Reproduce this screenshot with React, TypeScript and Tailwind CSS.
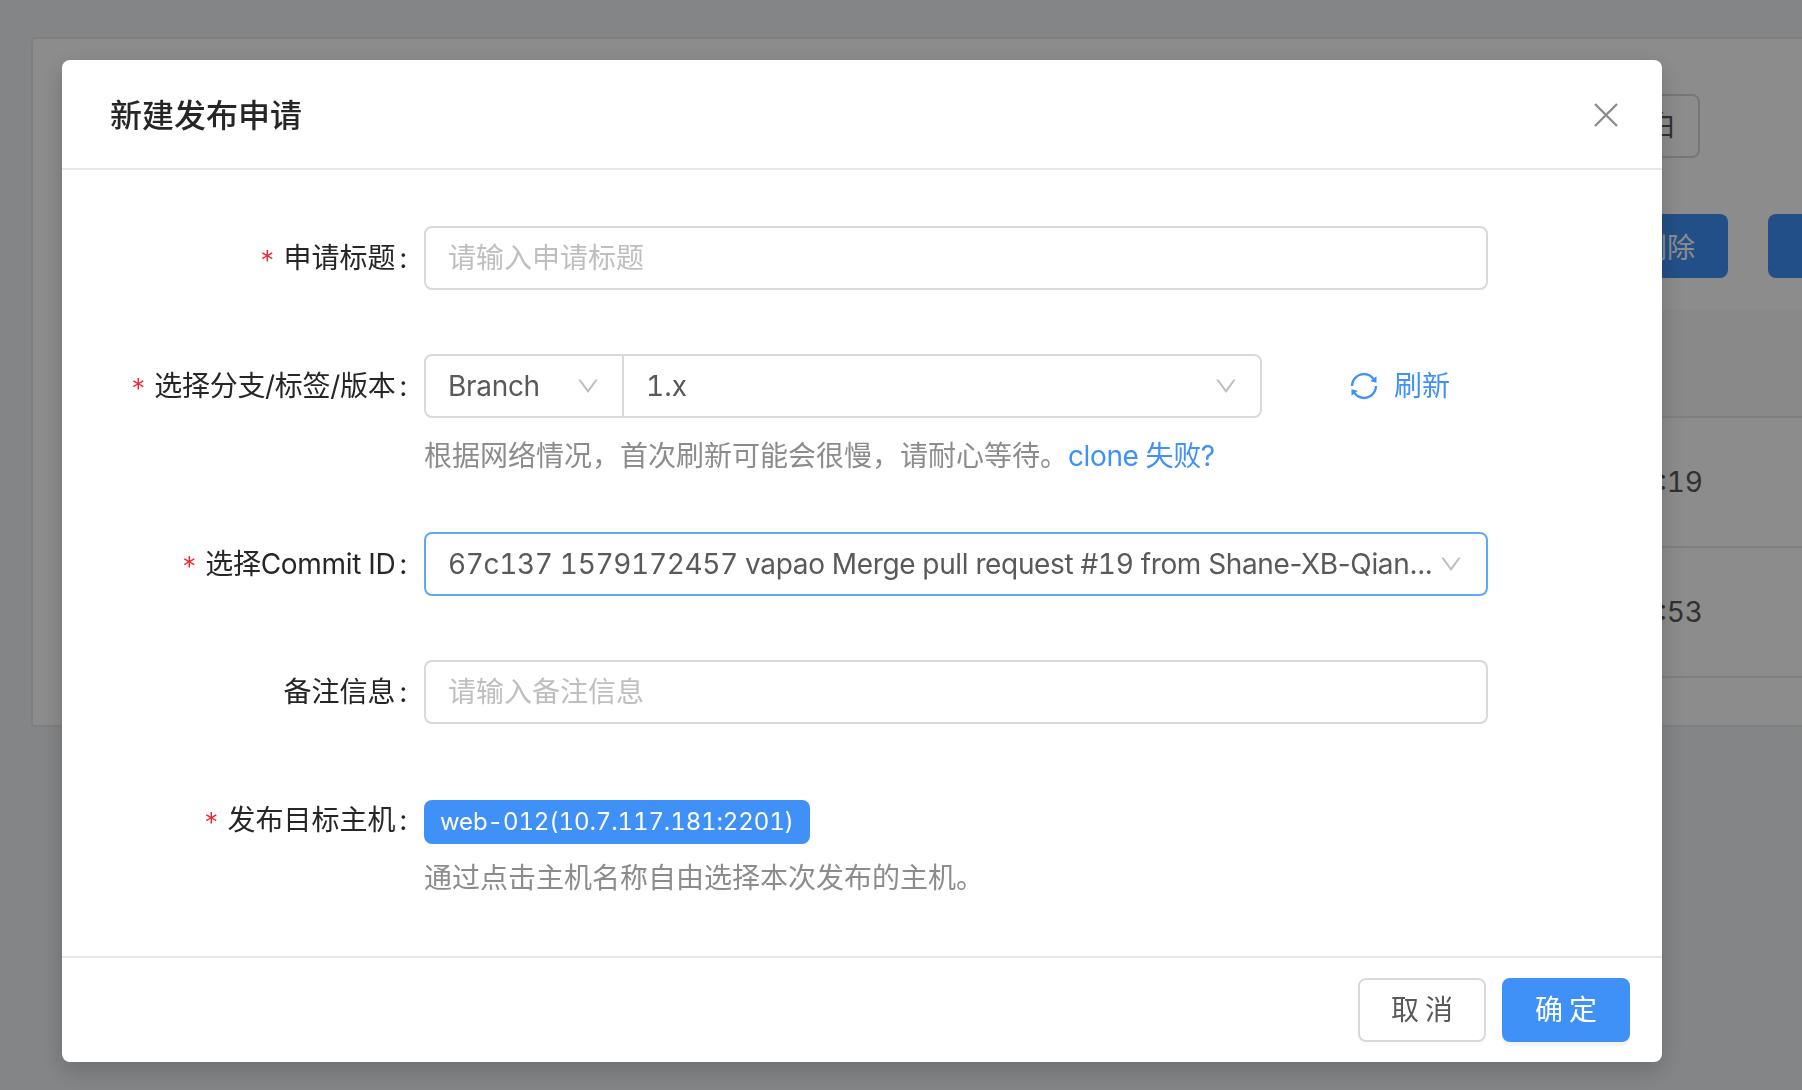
import React from 'react';
import { AiOutlineDown, AiOutlineSync } from 'react-icons/ai';

const FONT = 'font-["Inter","Noto_Sans_CJK_SC",sans-serif]';

interface FieldProps {
  label: string;
  required?: boolean;
  className?: string;
  labelClassName?: string;
  children: React.ReactNode;
}

const Label: React.FC<{ label: string; required?: boolean; className?: string; height: string }> = ({
  label,
  required,
  className,
  height,
}) => (
  <div className={`w-[362px] shrink-0 flex items-center justify-end pr-[15px] text-[28px] text-[#262626] whitespace-nowrap ${height}`}>
    {required && <span className="text-[#f5222d] mr-[7px] pt-[6px] leading-none font-light">*</span>}
    <span className={className}>{label}</span>
    <span className="ml-[4px] mr-[2px]">:</span>
  </div>
);

const Field: React.FC<FieldProps> = ({ label, required, className, labelClassName, children }) => (
  <div className={`flex ${className ?? ''}`}>
    <Label label={label} required={required} className={labelClassName} height="h-[64px]" />
    <div className="flex-1 min-w-0">{children}</div>
  </div>
);

const Chevron = () => <AiOutlineDown size={26} className="shrink-0 text-[#bfbfbf]" />;

const Background = () => (
  <div className="h-[1090px] overflow-hidden bg-[#f0f2f5] pt-[37px] pl-[31px]">
    <div className="h-[690px] bg-white border-2 border-r-0 border-[#e8e8e8] rounded-l-[4px] text-[28px] text-[#595959] overflow-hidden">
      <div className="flex justify-end pt-[55px] pr-[102px]">
        <button className="w-[160px] h-[64px] flex items-center justify-end pr-[22px] border-2 border-[#d9d9d9] rounded-[8px] bg-white">空白</button>
      </div>
      <div className="flex justify-end gap-[40px] mt-[56px] -mr-[94px]">
        <button className="w-[160px] h-[64px] pt-[3px] flex items-center justify-end pr-[33px] rounded-[8px] bg-[#4091f7] text-white">批量删除</button>
        <div className="w-[128px] h-[64px] rounded-[8px] bg-[#4091f7]" />
      </div>
      <div className="ml-[64px]">
        <div className="mt-[31px] h-[109px] bg-[#fafafa] border-b-2 border-[#e8e8e8]" />
        <div className="h-[130px] flex items-center justify-end pr-[99px] border-b-2 border-[#e8e8e8]">2020-01-16 19:10:19</div>
        <div className="h-[130px] flex items-center justify-end pr-[99px] border-b-2 border-[#e8e8e8]">2020-01-15 17:32:53</div>
      </div>
    </div>
  </div>
);

export default function App() {
  return (
    <div className={`relative h-[1090px] overflow-hidden tabular-nums ${FONT}`}>
      <Background />
      <div className="fixed inset-0 bg-black/45 pt-[60px] pl-[62px]">
        <div className="w-[1600px] h-[1002px] flex flex-col bg-white rounded-[8px] shadow-[0_8px_24px_rgba(0,0,0,0.2)]">
          <div className="h-[110px] shrink-0 flex items-center justify-between pl-[48px] pr-[44px] border-b-2 border-[#e8e8e8]">
            <h2 className="pt-[3px] text-[32px] font-medium text-[#262626]">新建发布申请</h2>
            <svg width="24" height="24" viewBox="0 0 24 24" className="mt-[1px] text-[#8c8c8c]" stroke="currentColor" strokeWidth="2.4">
              <path d="M1 1 L23 23 M23 1 L1 23" />
            </svg>
          </div>

          <div className="flex-1 pt-[56px]">
            <Field label="申请标题" required className="mb-[64px]">
              <div className="w-[1064px] h-[64px] px-[22px] flex items-center border-2 border-[#d9d9d9] rounded-[8px] text-[28px] text-[#bfbfbf]">
                请输入申请标题
              </div>
            </Field>

            <Field label="选择分支/标签/版本" required labelClassName="tracking-[-0.3px]" className="mb-[38px]">
              <div className="flex items-center">
                <div className="w-[838px] h-[64px] flex border-2 border-[#d9d9d9] rounded-[8px] text-[28px] text-[#595959]">
                  <div className="w-[198px] shrink-0 flex items-center justify-between pl-[22px] pr-[21px] border-r-2 border-[#d9d9d9]">
                    <span className="tracking-[-0.3px]">Branch</span>
                    <Chevron />
                  </div>
                  <div className="flex-1 flex items-center justify-between pl-[22px] pr-[21px]">
                    <span>1.x</span>
                    <Chevron />
                  </div>
                </div>
                <div className="ml-[86px] flex items-center text-[28px] text-[#4091f7]">
                  <AiOutlineSync size={32} />
                  <span className="ml-[14px]">刷新</span>
                </div>
              </div>
              <div className="h-[76px] flex items-center text-[28px] text-[#8c8c8c] whitespace-nowrap">
                根据网络情况，首次刷新可能会很慢，请耐心等待。<span className="text-[#4091f7] tracking-[-0.4px]">clone 失败?</span>
              </div>
            </Field>

            <Field label="选择Commit ID" required labelClassName="tracking-[-0.3px]" className="mb-[64px]">
              <div className="w-[1064px] h-[64px] pl-[22px] pr-[22px] flex items-center justify-between border-2 border-[#5fa8f8] rounded-[8px] text-[28px] text-[#595959]">
                <span className="whitespace-nowrap tracking-[-0.35px]">
                  67c137 1579172457 vapao Merge pull request #19 from <span className="normal-nums [font-feature-settings:normal]">Shane-XB-Qian...</span>
                </span>
                <Chevron />
              </div>
            </Field>

            <Field label="备注信息" className="mb-[76px]">
              <div className="w-[1064px] h-[64px] px-[22px] flex items-center border-2 border-[#d9d9d9] rounded-[8px] text-[28px] text-[#bfbfbf]">
                请输入备注信息
              </div>
            </Field>

            <div className="flex">
              <Label label="发布目标主机" required height="h-[40px]" />
              <div>
                <div className="inline-flex h-[44px] items-center px-[16px] rounded-[8px] bg-[#4091f7] text-[24px] text-white whitespace-nowrap tracking-[-0.12px]">
                  web-012(10.7.117.181:2201)
                </div>
                <div className="mt-[12px] h-[44px] flex items-center text-[28px] text-[#8c8c8c] whitespace-nowrap">
                  通过点击主机名称自由选择本次发布的主机。
                </div>
              </div>
            </div>
          </div>

          <div className="h-[106px] shrink-0 flex items-center justify-end gap-[16px] pr-[32px] border-t-2 border-[#e8e8e8]">
            <button className="w-[128px] h-[64px] pl-[6px] border-2 border-[#d9d9d9] rounded-[8px] bg-white text-[28px] text-[#595959] tracking-[6px] shadow-[0_4px_0_rgba(0,0,0,0.015)]">
              取消
            </button>
            <button className="w-[128px] h-[64px] pl-[6px] rounded-[8px] bg-[#4091f7] text-[28px] text-white tracking-[6px] shadow-[0_4px_0_rgba(0,0,0,0.045)]">
              确定
            </button>
          </div>
        </div>
      </div>
    </div>
  );
}
